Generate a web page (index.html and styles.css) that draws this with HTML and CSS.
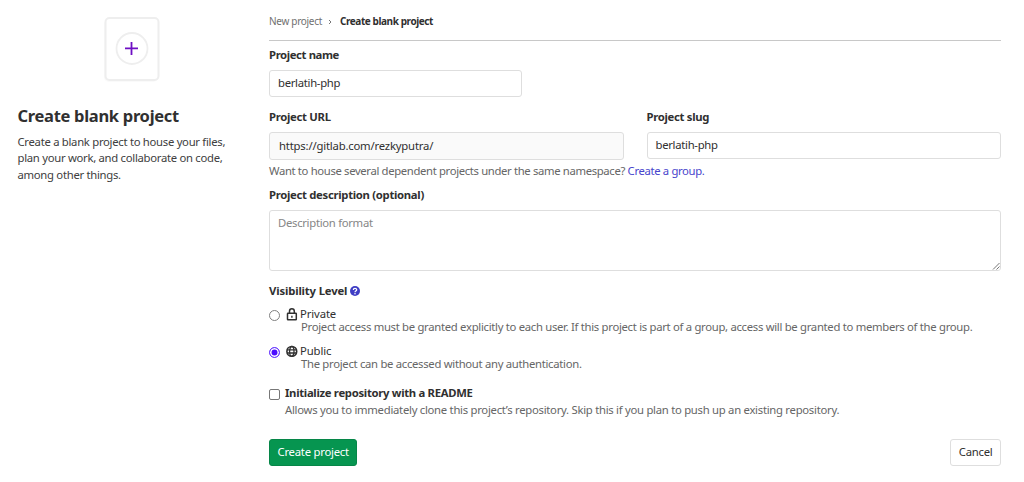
FILE: index.html
```html
<!DOCTYPE html>
<html lang="en">
<head>
<meta charset="utf-8">
<title>Create blank project</title>
<link rel="stylesheet" href="styles.css">
</head>
<body>
<div class="page">
  <aside class="intro">
    <svg class="illustration" width="60" height="68" viewBox="0 0 60 68" fill="none">
      <rect x="2" y="4" width="54" height="62" rx="5" fill="#fafafa"/>
      <rect x="3.500" y="2" width="53" height="62" rx="4" fill="#fff" stroke="#eee" stroke-width="2"/>
      <circle cx="30" cy="32.500" r="15.500" stroke="#eee" stroke-width="1.800"/>
      <path d="M29.500 26v13M23 32.300h13" stroke="#6e0fc4" stroke-width="1.800"/>
    </svg>
    <h1 class="intro-title">Create blank project</h1>
    <p class="intro-text">Create a blank project to house your files,<br>plan your work, and collaborate on code,<br>among other things.</p>
  </aside>
  <main class="content">
    <nav class="breadcrumb">
      <span class="crumb">New project</span>
      <svg class="chevron" width="4" height="6" viewBox="0 0 4 6" fill="none"><path d="M1 1l2 2-2 2" stroke="#777"/></svg>
      <span class="crumb-current">Create blank project</span>
    </nav>
    <form class="form">
      <div class="field field-name">
        <label class="label label-name">Project name</label>
        <div class="control">berlatih-php</div>
      </div>
      <div class="row">
        <div class="field">
          <label class="label">Project URL</label>
          <div class="control control-url">https://gitlab.com/rezkyputra/</div>
        </div>
        <div class="field">
          <label class="label">Project slug</label>
          <div class="control">berlatih-php</div>
        </div>
      </div>
      <p class="hint">Want to house several dependent projects under the same namespace? <a class="link">Create a group.</a></p>
      <label class="label">Project description (optional)</label>
      <div class="control control-area">Description format
        <svg class="grip" width="8" height="8" viewBox="0 0 8 8"><path d="M1 7.500L7.500 1M4.500 7.500l3-3" stroke="#777" fill="none"/></svg>
      </div>
      <div class="label label-visibility">Visibility Level
        <svg class="help" width="10" height="10" viewBox="0 0 16 16"><circle cx="8" cy="8" r="8" fill="#3f3dc4"/><path d="M5.300 6.300C5.300 2.800 10.700 2.900 10.700 6.100C10.700 8 8 7.900 8 9.800" stroke="#fff" stroke-width="2" fill="none"/><circle cx="8" cy="12.300" r="1.300" fill="#fff"/></svg>
      </div>
      <div class="option">
        <span class="radio"></span>
        <svg class="option-icon" width="12" height="13" viewBox="0 0 12 13" fill="none" stroke="#303030"><rect x="1.500" y="5.300" width="8.800" height="6.500" rx=".5" stroke-width="1.500"/><path d="M3.500 5.300V3.200a2.400 2.400 0 0 1 4.800 0v2.100" stroke-width="1.500"/><path d="M5.900 7.700v2" stroke-width="1.400"/></svg>
        <div class="option-body"><div class="option-title">Private</div><div class="option-text">Project access must be granted explicitly to each user. If this project is part of a group, access will be granted to members of the group.</div></div>
      </div>
      <div class="option">
        <span class="radio radio-on"></span>
        <svg class="option-icon" width="12" height="13" viewBox="0 0 12 13" fill="none" stroke="#303030"><circle cx="5.800" cy="6.400" r="4.900" stroke-width="1.600"/><ellipse cx="5.800" cy="6.400" rx="2.200" ry="4.900" stroke-width="1.300"/><path d="M1 4.800h9.600M1 8h9.600" stroke-width="1.300"/></svg>
        <div class="option-body"><div class="option-title">Public</div><div class="option-text">The project can be accessed without any authentication.</div></div>
      </div>
      <div class="readme">
        <span class="checkbox"></span>
        <div><div class="readme-title">Initialize repository with a README</div><div class="readme-text">Allows you to immediately clone this project’s repository. Skip this if you plan to push up an existing repository.</div></div>
      </div>
      <div class="actions">
        <button class="button button-primary" type="button">Create project</button>
        <button class="button" type="button">Cancel</button>
      </div>
    </form>
  </main>
</div>
</body>
</html>
```
FILE: styles.css
```css
* { box-sizing: border-box; }
body { margin: 0; background: #fff; color: #303030; font: 11.3px/16.5px "Noto Sans", sans-serif; letter-spacing: -0.3px; }
h1, p { margin: 0; }
svg { display: block; flex: none; }
.page { display: flex; gap: 24px; height: 482px; overflow: hidden; padding: 0 23px 0 17.5px; }
.intro { width: 227.5px; flex: none; padding-top: 16px; }
.illustration { margin-left: 84.5px; }
.intro-title { margin-top: 20px; font-size: 16.500px; line-height: 23px; white-space: nowrap; letter-spacing: -0.3px; }
.intro-text { margin-top: 7px; white-space: nowrap; color: #404040; letter-spacing: -0.29px; line-height: 16.4px; }
.content { flex: 1; min-width: 0; }
.breadcrumb { display: flex; align-items: center; height: 41px; padding-top: 3px; border-bottom: 1px solid #c8c8c8; font-size: 10px; color: #707070; }
.chevron { margin: 0 7.500px 0 6.500px; }
.crumb-current { font-weight: 700; color: #303030; letter-spacing: -0.42px; }
.form { padding-top: 5px; white-space: nowrap; }
.label { display: block; height: 23px; font-weight: 700; line-height: 17px; }
.label-name { height: 24px; letter-spacing: -0.38px; }
.control { display: flex; align-items: center; height: 27px; border: 1px solid #dedede; border-radius: 3px; padding: 0 8px; }
.field-name { width: 253px; margin-bottom: 11px; }
.row { display: grid; grid-template-columns: 1fr 1fr; column-gap: 23px; }
.row .label { height: 24px; }
.control-url { height: 28px; padding-left: 9px; background: #fafafa; letter-spacing: -0.19px; }
.hint { margin: 2px 0 7px; line-height: 17px; color: #666; letter-spacing: -0.35px; }
.link { color: #4845cc; }
.hint + .label { height: 24px; }
.control-area { position: relative; height: 61px; align-items: flex-start; padding-top: 4px; color: #868686; }
.grip { position: absolute; right: 0; bottom: 0; }
.label-visibility { display: flex; align-items: center; gap: 3px; height: 17px; margin: 11px 0 8px; letter-spacing: -0.15px; }
.help { margin-top: 1px; }
.option { display: flex; height: 37px; }
.option-icon { margin-top: 1px; }
.radio { flex: none; width: 11px; height: 11px; margin: 3px 6px 0 0; border: 1px solid #808080; border-radius: 50%; }
.radio-on { border-color: #6b3cff; background: #4b0cff; box-shadow: inset 0 0 0 1.5px #fff; }
.option-body { margin-left: 2px; }
.option-title { line-height: 13px; letter-spacing: -0.12px; }
.option-text { padding-left: 1px; line-height: 14px; color: #666; }
.readme { display: flex; margin-top: 4px; }
.checkbox { flex: none; width: 11px; height: 11px; margin: 4px 5px 0 0; border: 1px solid #777; border-radius: 2px; }
.readme-title { font-weight: 700; }
.readme-text { color: #666; letter-spacing: -0.275px; }
.actions { display: flex; justify-content: space-between; margin-top: 21px; }
.button { height: 27px; padding: 0 7.500px; border: 1px solid #dedede; border-radius: 3px; background: #fff; color: #303030; font: inherit; letter-spacing: -0.24px; }
.button-primary { background: #069550; border-color: #068648; color: #fff; }
```
